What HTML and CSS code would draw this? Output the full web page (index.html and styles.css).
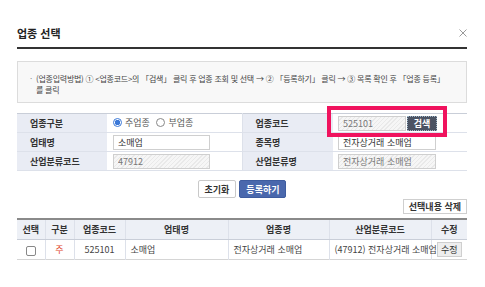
FILE: index.html
```html
<!DOCTYPE html>
<html lang="ko">
<head>
    <meta charset="UTF-8">
    <meta name="viewport" content="width=device-width, initial-scale=1.0">
    <title>업종 선택</title>
    <link rel="stylesheet" href="styles.css">
</head>
<body>
    <div class="modal">
        <div class="modal-head">
            <h2>업종 선택</h2>
            <button class="close" type="button" aria-label="닫기">
                <svg width="8" height="8" viewBox="0 0 8 8"><path d="M0.5 0.5L7.5 7.5M7.5 0.5L0.5 7.5" stroke="#9a9a9a" stroke-width="1" fill="none"/></svg>
            </button>
        </div>

        <div class="notice">
            <span class="bullet">·</span>
            <p>(업종입력방법) ① &lt;업종코드&gt;의 「검색」 클릭 후 업종 조회 및 선택 → ② 「등록하기」 클릭 → ③ 목록 확인 후 「업종 등록」<br>를 클릭</p>
        </div>

        <div class="form-wrap">
            <table class="form-table">
                <colgroup>
                    <col class="c-label"><col class="c-value"><col class="c-label2"><col class="c-value2">
                </colgroup>
                <tr>
                    <th>업종구분</th>
                    <td>
                        <label class="radio"><span class="dot on"></span>주업종</label>
                        <label class="radio"><span class="dot"></span>부업종</label>
                    </td>
                    <th>업종코드</th>
                    <td>
                        <div class="code-field">
                            <input class="field code readonly" type="text" value="525101" readonly>
                            <button class="btn-search" type="button">검색</button>
                        </div>
                    </td>
                </tr>
                <tr>
                    <th>업태명</th>
                    <td><input class="field" type="text" value="소매업"></td>
                    <th>종목명</th>
                    <td><input class="field" type="text" value="전자상거래 소매업"></td>
                </tr>
                <tr>
                    <th>산업분류코드</th>
                    <td><input class="field readonly" type="text" value="47912" readonly></td>
                    <th>산업분류명</th>
                    <td><input class="field readonly" type="text" value="전자상거래 소매업" readonly></td>
                </tr>
            </table>
            <div class="highlight"></div>
        </div>

        <div class="actions">
            <button class="btn" type="button">초기화</button>
            <button class="btn btn-blue" type="button">등록하기</button>
        </div>

        <div class="list-tools">
            <button class="btn btn-small" type="button">선택내용 삭제</button>
        </div>

        <table class="list-table">
            <colgroup>
                <col class="w28"><col class="w29"><col class="w51"><col class="w103"><col class="w101"><col class="w102"><col class="w36">
            </colgroup>
            <thead>
                <tr>
                    <th>선택</th><th>구분</th><th>업종코드</th><th>업태명</th><th>업종명</th><th>산업분류코드</th><th>수정</th>
                </tr>
            </thead>
            <tbody>
                <tr>
                    <td class="center"><span class="check"></span></td>
                    <td class="center main">주</td>
                    <td class="center">525101</td>
                    <td>소매업</td>
                    <td>전자상거래 소매업</td>
                    <td>(47912) 전자상거래 소매업</td>
                    <td class="center"><button class="btn-edit" type="button">수정</button></td>
                </tr>
            </tbody>
        </table>
    </div>
</body>
</html>
```

FILE: styles.css
```css
body {
    margin: 0;
    background-color: #fff;
    font-family: "Noto Sans CJK KR", "Noto Sans", sans-serif;
    color: #333;
}

.modal {
    width: 450px;
    padding: 0 18px 0 17px;
}

.modal-head {
    display: flex;
    justify-content: space-between;
    align-items: center;
    padding: 26px 0 7px;
    border-bottom: 2px solid #333;
}

.modal-head h2 {
    margin: 0;
    font-size: 11px;
    line-height: 14px;
    font-weight: bold;
    color: #222;
}

.close {
    display: flex;
    padding: 0;
    border: none;
    background: none;
}

.notice {
    display: flex;
    margin-top: 12px;
    padding: 11px 10px 7px 12px;
    background-color: #f8f8f8;
    border: 1px solid #dcdcdc;
    font-size: 8px;
    line-height: 11px;
    color: #444;
}

.notice .bullet {
    width: 6px;
    flex-shrink: 0;
    color: #888;
}

.notice p {
    margin: 0;
    white-space: nowrap;
    letter-spacing: -0.25px;
}

.form-wrap {
    position: relative;
    margin-top: 10px;
}

.form-table {
    width: 100%;
    border-collapse: collapse;
    table-layout: fixed;
    border-top: 1px solid #c9ced8;
    font-size: 9px;
}

.c-label { width: 90px; }
.c-value { width: 135px; }
.c-label2 { width: 91px; }
.c-value2 { width: 134px; }

.form-table th,
.form-table td {
    height: 18px;
    padding: 0;
    border-bottom: 1px solid #dde1ea;
}

.form-table th {
    padding-left: 13px;
    text-align: left;
    font-weight: bold;
    background-color: #e9ecf4;
    color: #333;
}

.form-table td {
    padding-left: 6px;
    background-color: #fff;
}

.form-table td + th {
    border-left: 1px solid #dde1ea;
}

.form-table td:last-child {
    padding-left: 5px;
}

.radio {
    display: inline-flex;
    align-items: center;
    margin-right: 4px;
    color: #555;
}

.dot {
    width: 7px;
    height: 7px;
    margin-right: 3px;
    border: 1px solid #888;
    border-radius: 50%;
    background-color: #fff;
}

.dot.on {
    border-color: #3b78d8;
    background: radial-gradient(circle, #3b78d8 0 2.5px, #fff 3px);
}

.field {
    display: block;
    box-sizing: border-box;
    width: 97px;
    height: 15px;
    padding: 0 4px;
    border: 1px solid #cfcfcf;
    background-color: #fff;
    font-family: inherit;
    font-size: 9px;
    color: #333;
}

.form-table td:last-child .field {
    width: 98px;
}

.field.readonly {
    color: #777;
    background: repeating-linear-gradient(135deg, #f6f6f6 0 2px, #e9e9e9 2px 3px);
}

.code-field {
    display: flex;
}

.form-table td:last-child .field.code {
    width: 68px;
}

.btn-search {
    width: 30px;
    height: 15px;
    margin-left: 1px;
    padding: 0;
    border: 1px dotted #9fb6c8;
    background-color: #4b5363;
    color: #fff;
    font-family: inherit;
    font-size: 9px;
    font-weight: bold;
}

.highlight {
    position: absolute;
    left: 310px;
    top: -7px;
    width: 112px;
    height: 23px;
    border: 4px solid #f0135e;
    pointer-events: none;
}

.actions {
    display: flex;
    justify-content: center;
    gap: 3px;
    margin-top: 9px;
}

.btn {
    height: 18px;
    padding: 0 6px;
    border: 1px solid #c9c9c9;
    border-radius: 2px;
    background-color: #fff;
    font-family: inherit;
    font-size: 9px;
    font-weight: bold;
    color: #333;
}

.btn-blue {
    border-color: #3e5c9f;
    background-color: #4a68ad;
    color: #fff;
}

.list-tools {
    display: flex;
    justify-content: flex-end;
    margin-top: 1px;
}

.btn-small {
    height: 15px;
    padding: 0 5px;
    border-radius: 0;
    border-color: #cfcfcf;
}

.list-table {
    width: 100%;
    margin-top: 4px;
    border-collapse: collapse;
    table-layout: fixed;
    border-top: 2px solid #8a8a8a;
    border-bottom: 1px solid #d5d5d5;
    font-size: 9px;
}

.w28 { width: 28px; }
.w29 { width: 29px; }
.w51 { width: 51px; }
.w103 { width: 103px; }
.w101 { width: 101px; }
.w102 { width: 102px; }
.w36 { width: 36px; }

.list-table th,
.list-table td {
    height: 19px;
    padding: 0 0 0 5px;
    border-left: 1px solid #dde1ea;
    white-space: nowrap;
}

.list-table th:first-child,
.list-table td:first-child {
    border-left: none;
}

.list-table th {
    padding: 0;
    text-align: center;
    font-weight: bold;
    background-color: #edf0f6;
    border-bottom: 1px solid #c9ced8;
}

.list-table td {
    color: #444;
}

.list-table td.center {
    padding: 0;
    text-align: center;
}

.list-table td.main {
    color: #e0452a;
}

.check {
    display: inline-block;
    width: 8px;
    height: 8px;
    border: 1px solid #888;
    border-radius: 2px;
    vertical-align: middle;
}

.btn-edit {
    height: 15px;
    padding: 0 3px;
    border: 1px solid #cfcfcf;
    background-color: #eee;
    font-family: inherit;
    font-size: 9px;
    color: #333;
}
```
